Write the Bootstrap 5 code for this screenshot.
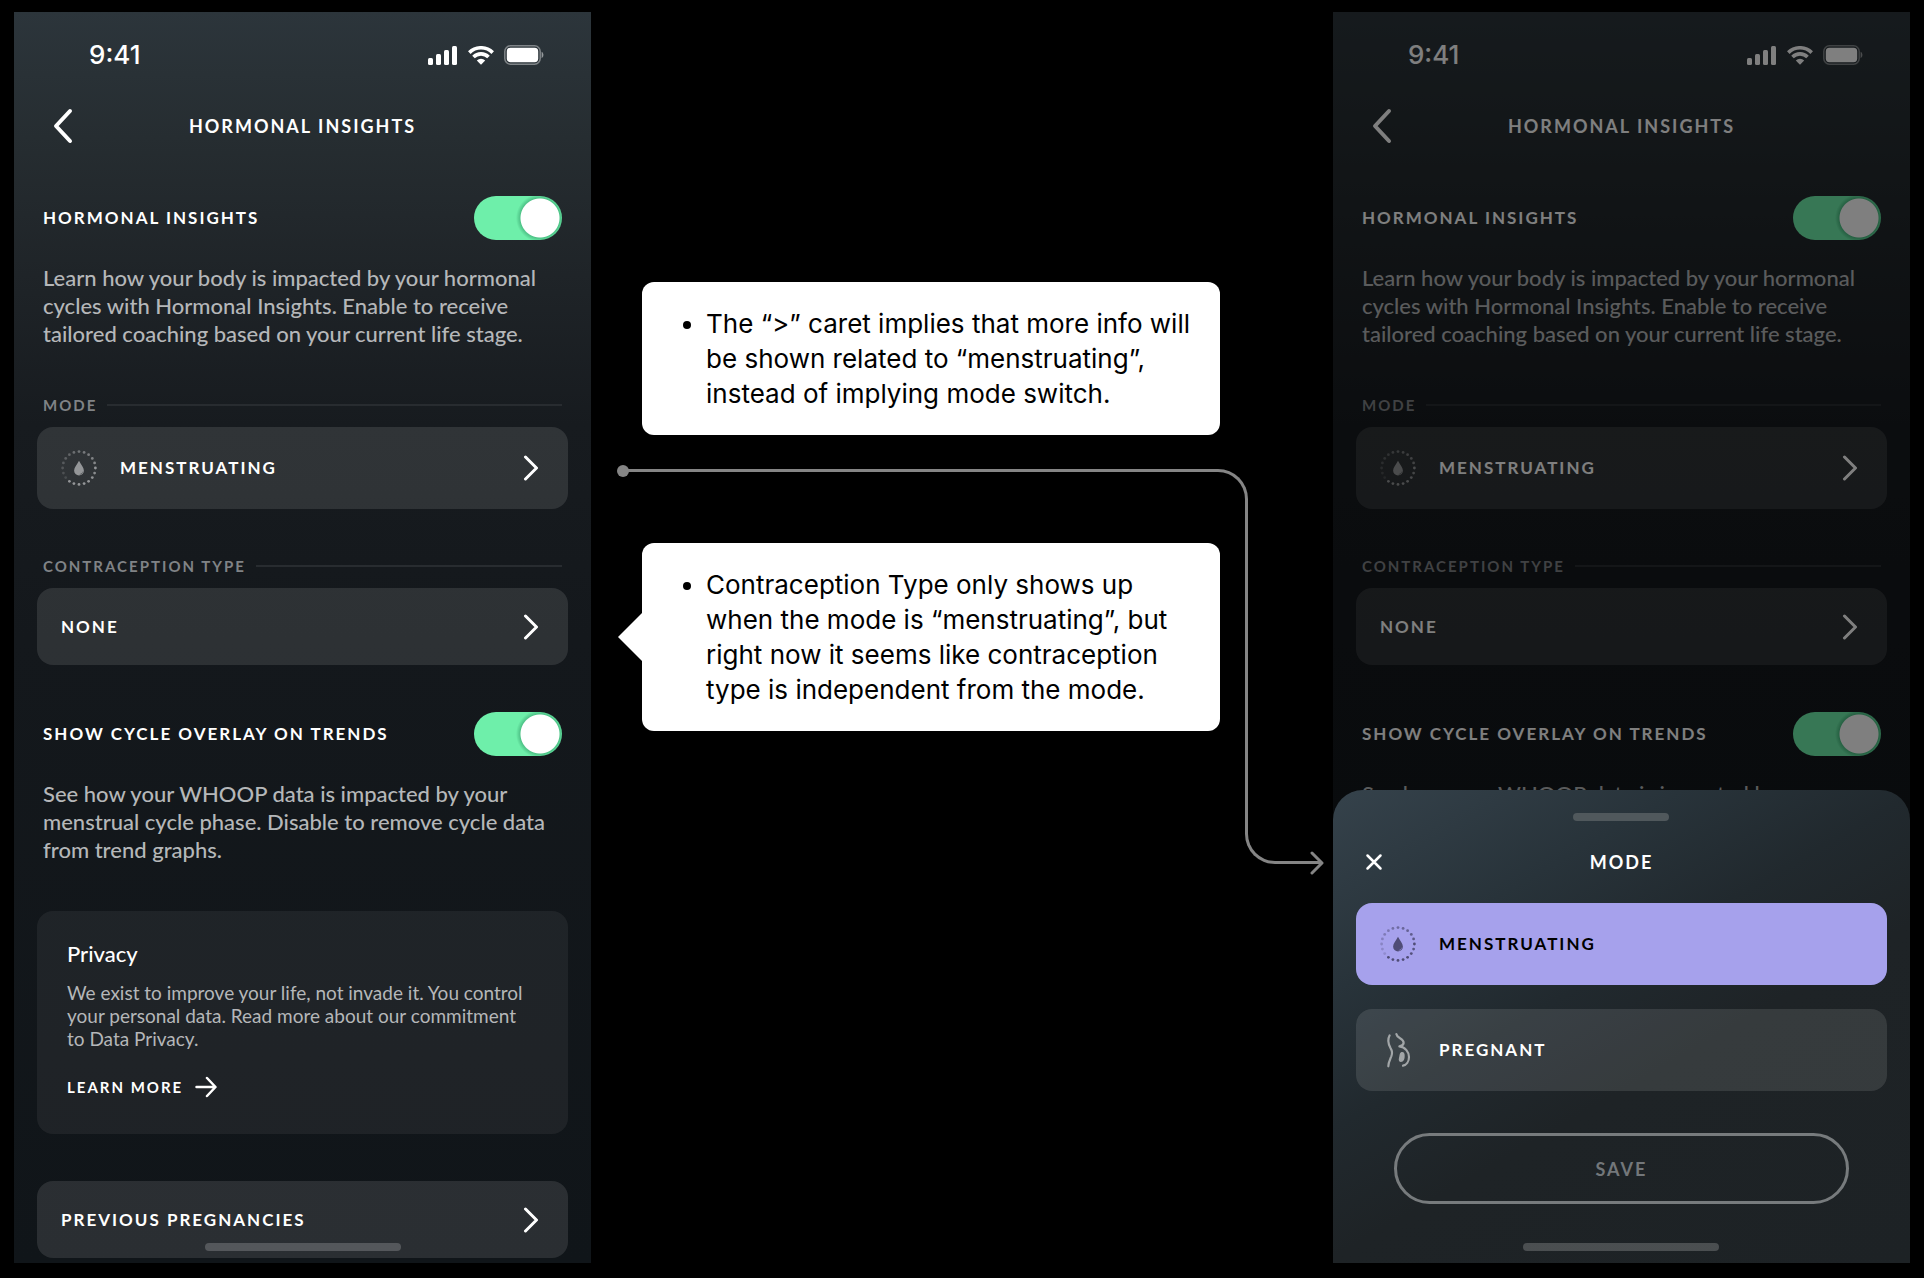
<!DOCTYPE html>
<html lang="en">
<head>
<meta charset="utf-8">
<meta name="viewport" content="width=device-width, initial-scale=1">
<title>Hormonal Insights – mode flow</title>
<link href="https://cdn.jsdelivr.net/npm/bootstrap@5.3.0/dist/css/bootstrap.min.css" rel="stylesheet">
<style>
  body { background: #000; color: #fff; font-family: Lato, "Open Sans", sans-serif; }
  .board { display: grid; grid-template-columns: 7fr 9fr 7fr; padding: 12px 14px 15px; }

  /* phone screens */
  .phone { background: linear-gradient(180deg, #2c353b 0, #262d31 10%, #1f2428 21%, #171b1f 33%, #14181c 50%, #101519 100%); padding-bottom: 5px; }
  .status { height: 84px; padding: 2px 47px 0 75px; }
  .clock { font: 500 26px/30px Inter, sans-serif; }
  .status-icons { gap: 10px; }
  .topbar { height: 60px; display: grid; grid-template-columns: 58px 1fr 58px; align-items: center; padding: 0 20px; margin-bottom: 40px; }
  .heading { font-size: 18px; line-height: 24px; font-weight: 700; letter-spacing: 2px; text-align: center; margin: 0; }
  .icon-btn { background: none; border: 0; padding: 0; color: inherit; line-height: 0; }
  .screen { padding: 0 23px; }
  .inset { padding: 0 6px; }
  .caps { font-size: 17px; line-height: 24px; font-weight: 700; letter-spacing: 2px; }
  .toggle.form-check-input { width: 88px; height: 44px; margin: 0; border: 0; border-radius: 22px; flex: none;
    background: radial-gradient(circle at 66px 22px, #fff 19px, #4fc488 20px, #6eefaa 24px) #6eefaa; opacity: 1; }
  .blurb { color: #b5b7b9; font-size: 22px; line-height: 28px; font-weight: 500; margin: 24px 0 0; }
  .group { margin-top: 47px; }
  .group-label { color: #808386; font-size: 15px; line-height: 20px; font-weight: 700; letter-spacing: 2px; margin: 0 0 12px; gap: 10px; }
  .group-label::after { content: ""; flex: 1; height: 2px; background: #282c30; }
  .tile { display: flex; align-items: center; width: 100%; min-height: 77px; padding: 0 29px 0 24px; border: 0; border-radius: 16px; background: rgba(255,255,255,.11); color: #fff; text-align: left; }
  .tile-tall { min-height: 82px; }
  .tile svg.lead-icon { margin-right: 23px; color: #949698; }
  .privacy { background: rgba(255,255,255,.06); border-radius: 16px; padding: 31px 36px 35px 30px; }
  .privacy h2 { font-size: 22px; line-height: 24px; font-weight: 500; margin: 0 0 15px; }
  .privacy p { color: #b5b7b9; font-size: 19px; line-height: 23px; margin: 0 0 25px; }
  .learn { color: #fff; text-decoration: none; font-size: 15px; line-height: 24px; font-weight: 700; letter-spacing: 2px; gap: 12px; }
  .home-bar { position: absolute; left: 50%; bottom: 12px; width: 196px; height: 8px; margin-left: -98px; border-radius: 4px; background: rgba(255,255,255,.2); }

  /* dimmed screen and its bottom sheet */
  .scrim { position: absolute; inset: 0; background: rgba(0,0,0,.5); }
  .sheet { position: absolute; left: 0; right: 0; bottom: 0; border-radius: 30px 30px 0 0; padding: 23px 23px 59px;
    background: linear-gradient(150deg, #35424b 0, #28333a 25%, #21292e 42%, #1e2326 58%, #1d2225 100%); }
  .grabber { width: 96px; height: 8px; border-radius: 4px; background: #50585c; margin: 0 auto; }
  .sheet-bar { display: grid; grid-template-columns: 36px 1fr 36px; align-items: center; margin: 25px 0; height: 32px; justify-items: center; }
  .tile-on { background: #a6a1ec; color: #000; }
  .tile.tile-on svg.lead-icon { color: #4f4c75; }
  .tile-gap { margin-top: 24px; }
  .tile-off svg.lead-icon { color: #a2a6a8; }
  .save { display: block; width: calc(100% - 76px); height: 71px; margin: 42px auto 0; border: 3px solid #777b7d; border-radius: 36px; background: none; color: #73777a; }
  .save:disabled { opacity: 1; }

  /* annotations */
  .notes { padding: 270px 113px 0 51px; }
  .note { position: relative; background: #fff; color: #000; border-radius: 12px; padding: 24px; }
  .note ul { margin: 0; padding-left: 40px; font: 400 26px/35px Inter, sans-serif; }
  .note + .note { margin-top: 108px; }
  .note-tail::before { content: ""; position: absolute; left: -24px; top: 50%; margin-top: -25px; border: solid transparent; border-width: 25px 25px 25px 0; border-right-color: #fff; }
  .link-line { position: absolute; left: 26px; right: 9px; top: 453px; height: 410px; color: #858585; }
  .link-line span { position: absolute; border: 0 solid currentColor; }
  .link-dot { left: 0; top: 0; width: 12px; height: 12px; border-radius: 50%; background: currentColor; }
  .link-line .seg-a { left: 8px; right: 76px; top: 4px; height: 200px; border-width: 3px 3px 0 0; border-top-right-radius: 30px; }
  .link-line .seg-b { width: 77px; right: 2px; top: 204px; height: 195px; border-width: 0 0 3px 3px; border-bottom-left-radius: 30px; }
  .link-line svg { position: absolute; right: 0; top: 384px; }
</style>
<script src="https://cdn.jsdelivr.net/npm/bootstrap@5.3.0/dist/js/bootstrap.bundle.min.js"></script>
</head>
<body>

<svg width="0" height="0" class="d-block position-absolute" aria-hidden="true">
  <symbol id="signal" viewBox="0 0 30 19"><g fill="currentColor"><rect x="0" y="12" width="5" height="7" rx="1.5"/><rect x="8" y="8" width="5" height="11" rx="1.5"/><rect x="16" y="4" width="5" height="15" rx="1.5"/><rect x="24" y="0" width="5" height="19" rx="1.5"/></g></symbol>
  <symbol id="wifi" viewBox="0 0 26 19"><g fill="none" stroke="currentColor" stroke-width="3.6"><path d="M1.3 6.6a16.6 16.6 0 0 1 23.4 0"/><path d="M5.5 11a10.6 10.6 0 0 1 15 0"/></g><path d="M13 18.8l-4.2-4.3a6 6 0 0 1 8.4 0z" fill="currentColor"/></symbol>
  <symbol id="battery" viewBox="0 0 40 20"><rect x=".8" y=".8" width="35.4" height="18.4" rx="5.6" fill="none" stroke="currentColor" stroke-opacity=".4" stroke-width="1.5"/><rect x="2.8" y="2.8" width="31.4" height="14.4" rx="3.6" fill="currentColor"/><path d="M37.6 6.8c2.4 1.2 2.4 5.2 0 6.4z" fill="currentColor" fill-opacity=".5"/></symbol>
  <symbol id="back" viewBox="0 0 20 36"><path d="M17 3L3 18l14 15" fill="none" stroke="currentColor" stroke-width="4" stroke-linecap="round" stroke-linejoin="round"/></symbol>
  <symbol id="chevron" viewBox="0 0 16 26"><path d="M2.500 2l11 11-11 11" fill="none" stroke="currentColor" stroke-width="3" stroke-linecap="round" stroke-linejoin="round"/></symbol>
  <symbol id="cycle" viewBox="-18 -18 36 36">
    <g fill="currentColor">
      <circle cx="0" cy="-16.4" r="1.4" opacity=".65"/><circle cx="5.1" cy="-15.6" r="1.4" opacity=".7"/><circle cx="9.6" cy="-13.3" r="1.4" opacity=".75"/><circle cx="13.3" cy="-9.6" r="1.4" opacity=".8"/><circle cx="15.6" cy="-5.1" r="1.4" opacity=".85"/>
      <circle cx="16.4" cy="0" r="1.4"/><circle cx="15.6" cy="5.1" r="1.4" opacity=".9"/><circle cx="13.3" cy="9.6" r="1.4" opacity=".95"/><circle cx="9.6" cy="13.3" r="1.4"/><circle cx="5.1" cy="15.6" r="1.4"/>
      <circle cx="0" cy="16.4" r="1.4"/><circle cx="-5.1" cy="15.6" r="1.4"/><circle cx="-9.6" cy="13.3" r="1.4"/><circle cx="-13.3" cy="9.6" r="1.4" opacity=".25"/><circle cx="-15.6" cy="5.1" r="1.4" opacity=".3"/>
      <circle cx="-16.4" cy="0" r="1.4" opacity=".35"/><circle cx="-15.6" cy="-5.1" r="1.4" opacity=".4"/><circle cx="-13.3" cy="-9.6" r="1.4" opacity=".45"/><circle cx="-9.6" cy="-13.3" r="1.4" opacity=".5"/><circle cx="-5.1" cy="-15.6" r="1.4" opacity=".6"/>
      <path fill-rule="evenodd" d="M0-7.2C2-3.6 4.9-.4 4.9 2.600A4.900 4.900 0 0 1-4.900 2.600C-4.900-.4-2-3.600 0-7.200zM3.900 3.200A4 4 0 0 1 .4 6.400 3.200 3.200 0 0 0 3.900 3.200z"/>
    </g>
  </symbol>
  <symbol id="belly" viewBox="28 364 108 108">
    <g fill="none" stroke="currentColor" stroke-width="6.500" stroke-linecap="round" stroke-linejoin="round"><path d="M57 374C48 390 54 403 60 413Q67 424 62 437C57 449 53 456 53 467"/><path d="M77 370C79 384 99 382 99 397Q98 405 86 407C104 409 115 425 115 439C115 453 107 463 97 465"/></g>
    <path fill="currentColor" d="M91 425c8-3 12 4 11 12 0 10-4 17-11 17-6 0-8-6-6-13 2-5 1-13 6-16z"/>
  </symbol>
</svg>

<main class="board">

  <section class="phone position-relative" aria-label="Hormonal insights screen">
    <div class="status d-flex align-items-center justify-content-between">
      <span class="clock">9:41</span>
      <span class="status-icons d-flex align-items-center">
        <svg width="30" height="19"><use href="#signal"/></svg><svg width="26" height="19"><use href="#wifi"/></svg><svg width="40" height="20"><use href="#battery"/></svg>
      </span>
    </div>
    <header class="topbar">
      <button class="icon-btn" type="button" aria-label="Back"><svg width="20" height="36"><use href="#back"/></svg></button>
      <h1 class="heading">HORMONAL INSIGHTS</h1>
    </header>
    <div class="screen">
      <div class="inset">
        <div class="d-flex align-items-center justify-content-between form-switch p-0">
          <label class="caps" for="insights">HORMONAL INSIGHTS</label>
          <input class="form-check-input toggle" type="checkbox" role="switch" id="insights" checked>
        </div>
        <p class="blurb">Learn how your body is impacted by your hormonal cycles with Hormonal Insights. Enable to receive tailored coaching based on your current life stage.</p>
      </div>
      <div class="group">
        <h2 class="group-label inset d-flex align-items-center">MODE</h2>
        <button class="tile tile-tall caps" type="button">
          <svg class="lead-icon" width="36" height="36"><use href="#cycle"/></svg>
          <span class="flex-fill">MENSTRUATING</span>
          <svg width="16" height="26"><use href="#chevron"/></svg>
        </button>
      </div>
      <div class="group">
        <h2 class="group-label inset d-flex align-items-center">CONTRACEPTION TYPE</h2>
        <button class="tile caps" type="button">
          <span class="flex-fill">NONE</span>
          <svg width="16" height="26"><use href="#chevron"/></svg>
        </button>
      </div>
      <div class="group inset">
        <div class="d-flex align-items-center justify-content-between form-switch p-0">
          <label class="caps" for="overlay">SHOW CYCLE OVERLAY ON TRENDS</label>
          <input class="form-check-input toggle" type="checkbox" role="switch" id="overlay" checked>
        </div>
        <p class="blurb">See how your WHOOP data is impacted by your menstrual cycle phase. Disable to remove cycle data from trend graphs.</p>
      </div>
      <div class="group privacy">
        <h2>Privacy</h2>
        <p>We exist to improve your life, not invade it. You control your personal data. Read more about our commitment to Data Privacy.</p>
        <a class="learn d-inline-flex align-items-center" href="#">LEARN MORE
          <svg width="22" height="22" viewBox="0 0 22 22" fill="none" stroke="currentColor" stroke-width="2.500" stroke-linecap="round" stroke-linejoin="round"><path d="M1.500 11H20M12 2l8.500 9L12 20"/></svg>
        </a>
      </div>
      <button class="group tile caps" type="button">
        <span class="flex-fill">PREVIOUS PREGNANCIES</span>
        <svg width="16" height="26"><use href="#chevron"/></svg>
      </button>
    </div>
    <div class="home-bar"></div>
  </section>

  <section class="notes position-relative" aria-label="Annotations">
    <div class="note"><ul><li>The “&gt;” caret implies that more info will be shown related to “menstruating”, instead of implying mode switch.</li></ul></div>
    <div class="note note-tail"><ul><li>Contraception Type only shows up when the mode is “menstruating”, but right now it seems like contraception type is independent from the mode.</li></ul></div>
    <div class="link-line" aria-hidden="true">
      <span class="link-dot"></span><span class="seg-a"></span><span class="seg-b"></span>
      <svg width="14" height="28" viewBox="0 0 14 28" fill="none" stroke="currentColor" stroke-width="3" stroke-linecap="round" stroke-linejoin="round"><path d="M2 4l10 10L2 24"/></svg>
    </div>
  </section>

  <section class="phone position-relative overflow-hidden" aria-label="Mode selection screen">
    <div class="status d-flex align-items-center justify-content-between">
      <span class="clock">9:41</span>
      <span class="status-icons d-flex align-items-center">
        <svg width="30" height="19"><use href="#signal"/></svg><svg width="26" height="19"><use href="#wifi"/></svg><svg width="40" height="20"><use href="#battery"/></svg>
      </span>
    </div>
    <header class="topbar">
      <button class="icon-btn" type="button" aria-label="Back"><svg width="20" height="36"><use href="#back"/></svg></button>
      <h1 class="heading">HORMONAL INSIGHTS</h1>
    </header>
    <div class="screen">
      <div class="inset">
        <div class="d-flex align-items-center justify-content-between form-switch p-0">
          <label class="caps" for="insights2">HORMONAL INSIGHTS</label>
          <input class="form-check-input toggle" type="checkbox" role="switch" id="insights2" checked>
        </div>
        <p class="blurb">Learn how your body is impacted by your hormonal cycles with Hormonal Insights. Enable to receive tailored coaching based on your current life stage.</p>
      </div>
      <div class="group">
        <h2 class="group-label inset d-flex align-items-center">MODE</h2>
        <button class="tile tile-tall caps" type="button">
          <svg class="lead-icon" width="36" height="36"><use href="#cycle"/></svg>
          <span class="flex-fill">MENSTRUATING</span>
          <svg width="16" height="26"><use href="#chevron"/></svg>
        </button>
      </div>
      <div class="group">
        <h2 class="group-label inset d-flex align-items-center">CONTRACEPTION TYPE</h2>
        <button class="tile caps" type="button">
          <span class="flex-fill">NONE</span>
          <svg width="16" height="26"><use href="#chevron"/></svg>
        </button>
      </div>
      <div class="group inset">
        <div class="d-flex align-items-center justify-content-between form-switch p-0">
          <label class="caps" for="overlay2">SHOW CYCLE OVERLAY ON TRENDS</label>
          <input class="form-check-input toggle" type="checkbox" role="switch" id="overlay2" checked>
        </div>
        <p class="blurb">See how your WHOOP data is impacted by your</p>
      </div>
    </div>
    <div class="scrim"></div>
    <div class="sheet" role="dialog" aria-label="Mode">
      <div class="grabber"></div>
      <div class="sheet-bar">
        <button class="icon-btn" type="button" aria-label="Close"><svg width="18" height="18" viewBox="0 0 18 18" fill="none" stroke="currentColor" stroke-width="2.500" stroke-linecap="round"><path d="M2.500 2.500l13 13M15.500 2.500l-13 13"/></svg></button>
        <h2 class="heading">MODE</h2>
      </div>
      <button class="tile tile-tall tile-on caps" type="button">
        <svg class="lead-icon" width="36" height="36"><use href="#cycle"/></svg>
        <span>MENSTRUATING</span>
      </button>
      <button class="tile tile-tall tile-off tile-gap caps" type="button">
        <svg class="lead-icon" width="36" height="36"><use href="#belly"/></svg>
        <span>PREGNANT</span>
      </button>
      <button class="save heading" type="button" disabled>SAVE</button>
      <div class="home-bar"></div>
    </div>
  </section>

</main>
</body>
</html>
